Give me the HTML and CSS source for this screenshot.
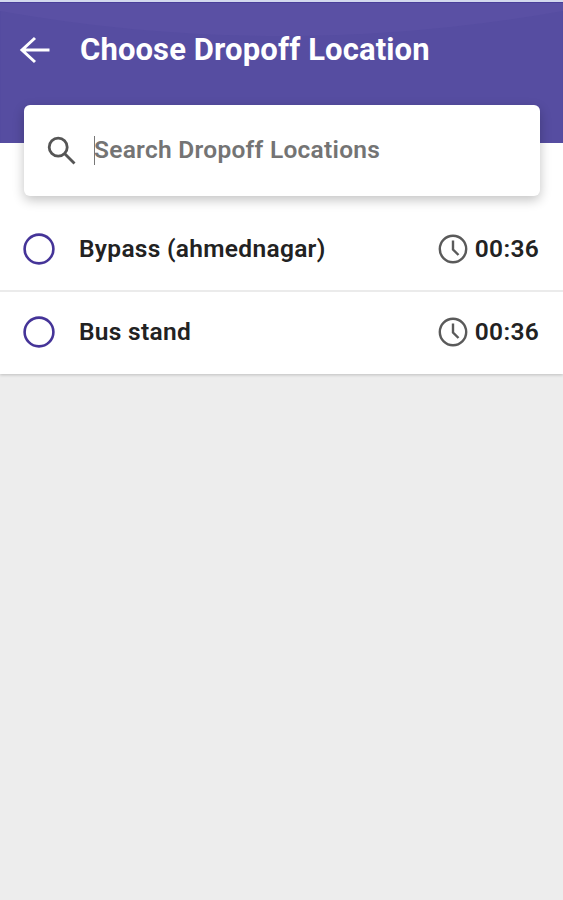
FILE: index.html
```html
<!DOCTYPE html>
<html lang="en">
<head>
<meta charset="utf-8">
<title>Choose Dropoff Location</title>
<link rel="stylesheet" href="styles.css">
</head>
<body>
<header class="header">
  <svg class="sheen" viewBox="0 0 563 34" preserveAspectRatio="none"><path d="M0 8Q280 58 563 8V0H0Z"/></svg>
  <div class="toolbar">
    <svg class="back" viewBox="0 0 32 30"><path d="M30.5 15H3M16 3L3 15L16 27"/></svg>
    <h1 class="title">Choose Dropoff Location</h1>
  </div>
</header>
<main>
  <div class="search">
    <svg class="search-icon" viewBox="0 0 30 30"><circle cx="11.2" cy="11.2" r="9"/><path d="M18 18L27.5 27.5"/></svg>
    <span class="caret"></span>
    <span class="placeholder">Search Dropoff Locations</span>
  </div>
  <ul class="list">
    <li class="row">
      <svg class="radio" viewBox="0 0 32 32"><circle cx="16" cy="16" r="14.4"/></svg>
      <span class="name">Bypass (ahmednagar)</span>
      <svg class="clock" viewBox="0 0 30 30"><circle cx="15" cy="15" r="13.2"/><path d="M15 6.5V15.5L20.5 21"/></svg>
      <span class="time">00:36</span>
    </li>
    <li class="row">
      <svg class="radio" viewBox="0 0 32 32"><circle cx="16" cy="16" r="14.4"/></svg>
      <span class="name">Bus stand</span>
      <svg class="clock" viewBox="0 0 30 30"><circle cx="15" cy="15" r="13.2"/><path d="M15 6.5V15.5L20.5 21"/></svg>
      <span class="time">00:36</span>
    </li>
  </ul>
</main>
</body>
</html>
```
FILE: styles.css
```css
* { box-sizing: border-box; }
body {
  margin: 0;
  min-height: 900px;
  background: #ededed;
  font-family: Roboto, "Liberation Sans", sans-serif;
}
.header {
  position: relative;
  height: 143px;
  background: #564da1;
  border-top: 2px solid #d3d8ee;
  box-shadow: inset 0 1px 1px #4a3f99;
}
.sheen {
  position: absolute;
  top: 1px;
  left: 0;
  width: 100%;
  height: 34px;
  fill: #5a50a4;
}
.toolbar {
  position: relative;
  display: flex;
  align-items: center;
  height: 96px;
  padding-left: 19px;
}
.back {
  width: 32px;
  height: 30px;
  margin-right: 29px;
  fill: none;
  stroke: #fff;
  stroke-width: 3;
}
.title {
  margin: 0;
  font-size: 31px;
  font-weight: 700;
  line-height: 36px;
  letter-spacing: .12px;
  color: #fff;
  white-space: nowrap;
}
main {
  display: flow-root;
  height: 231px;
  background: #fff;
  box-shadow: 0 1px 3px rgba(0, 0, 0, .2);
}
.search {
  position: relative;
  display: flex;
  align-items: center;
  height: 91px;
  margin: -38px 23px 0 24px;
  padding-left: 23px;
  border-radius: 6px;
  background: #fff;
  box-shadow: 0 4px 12px rgba(0, 0, 0, .24);
}
.search-icon {
  width: 30px;
  height: 30px;
  margin-right: 17px;
  fill: none;
  stroke: #555;
  stroke-width: 2.8;
}
.caret {
  width: 1px;
  height: 29px;
  margin-right: -1px;
  background: #777;
}
.placeholder {
  padding-bottom: 1px;
  font-size: 24.5px;
  font-weight: 600;
  line-height: 28px;
  letter-spacing: .27px;
  color: #747474;
  white-space: nowrap;
}
.list {
  margin: 0;
  padding: 12px 0 0;
  list-style: none;
}
.row {
  display: flex;
  align-items: center;
  height: 80px;
  padding: 0 24px 0 23px;
}
.row:first-child {
  height: 84px;
  border-bottom: 2px solid #ebebeb;
}
.radio {
  width: 32px;
  height: 32px;
  margin-right: 24px;
  fill: none;
  stroke: #453498;
  stroke-width: 2.6;
}
.name, .time {
  font-size: 24.5px;
  font-weight: 600;
  line-height: 28px;
  letter-spacing: .3px;
  color: #222;
  white-space: nowrap;
}
.clock {
  width: 30px;
  height: 30px;
  margin: 0 7px 0 auto;
  fill: none;
  stroke: #5a5a5a;
  stroke-width: 2.4;
}
```
